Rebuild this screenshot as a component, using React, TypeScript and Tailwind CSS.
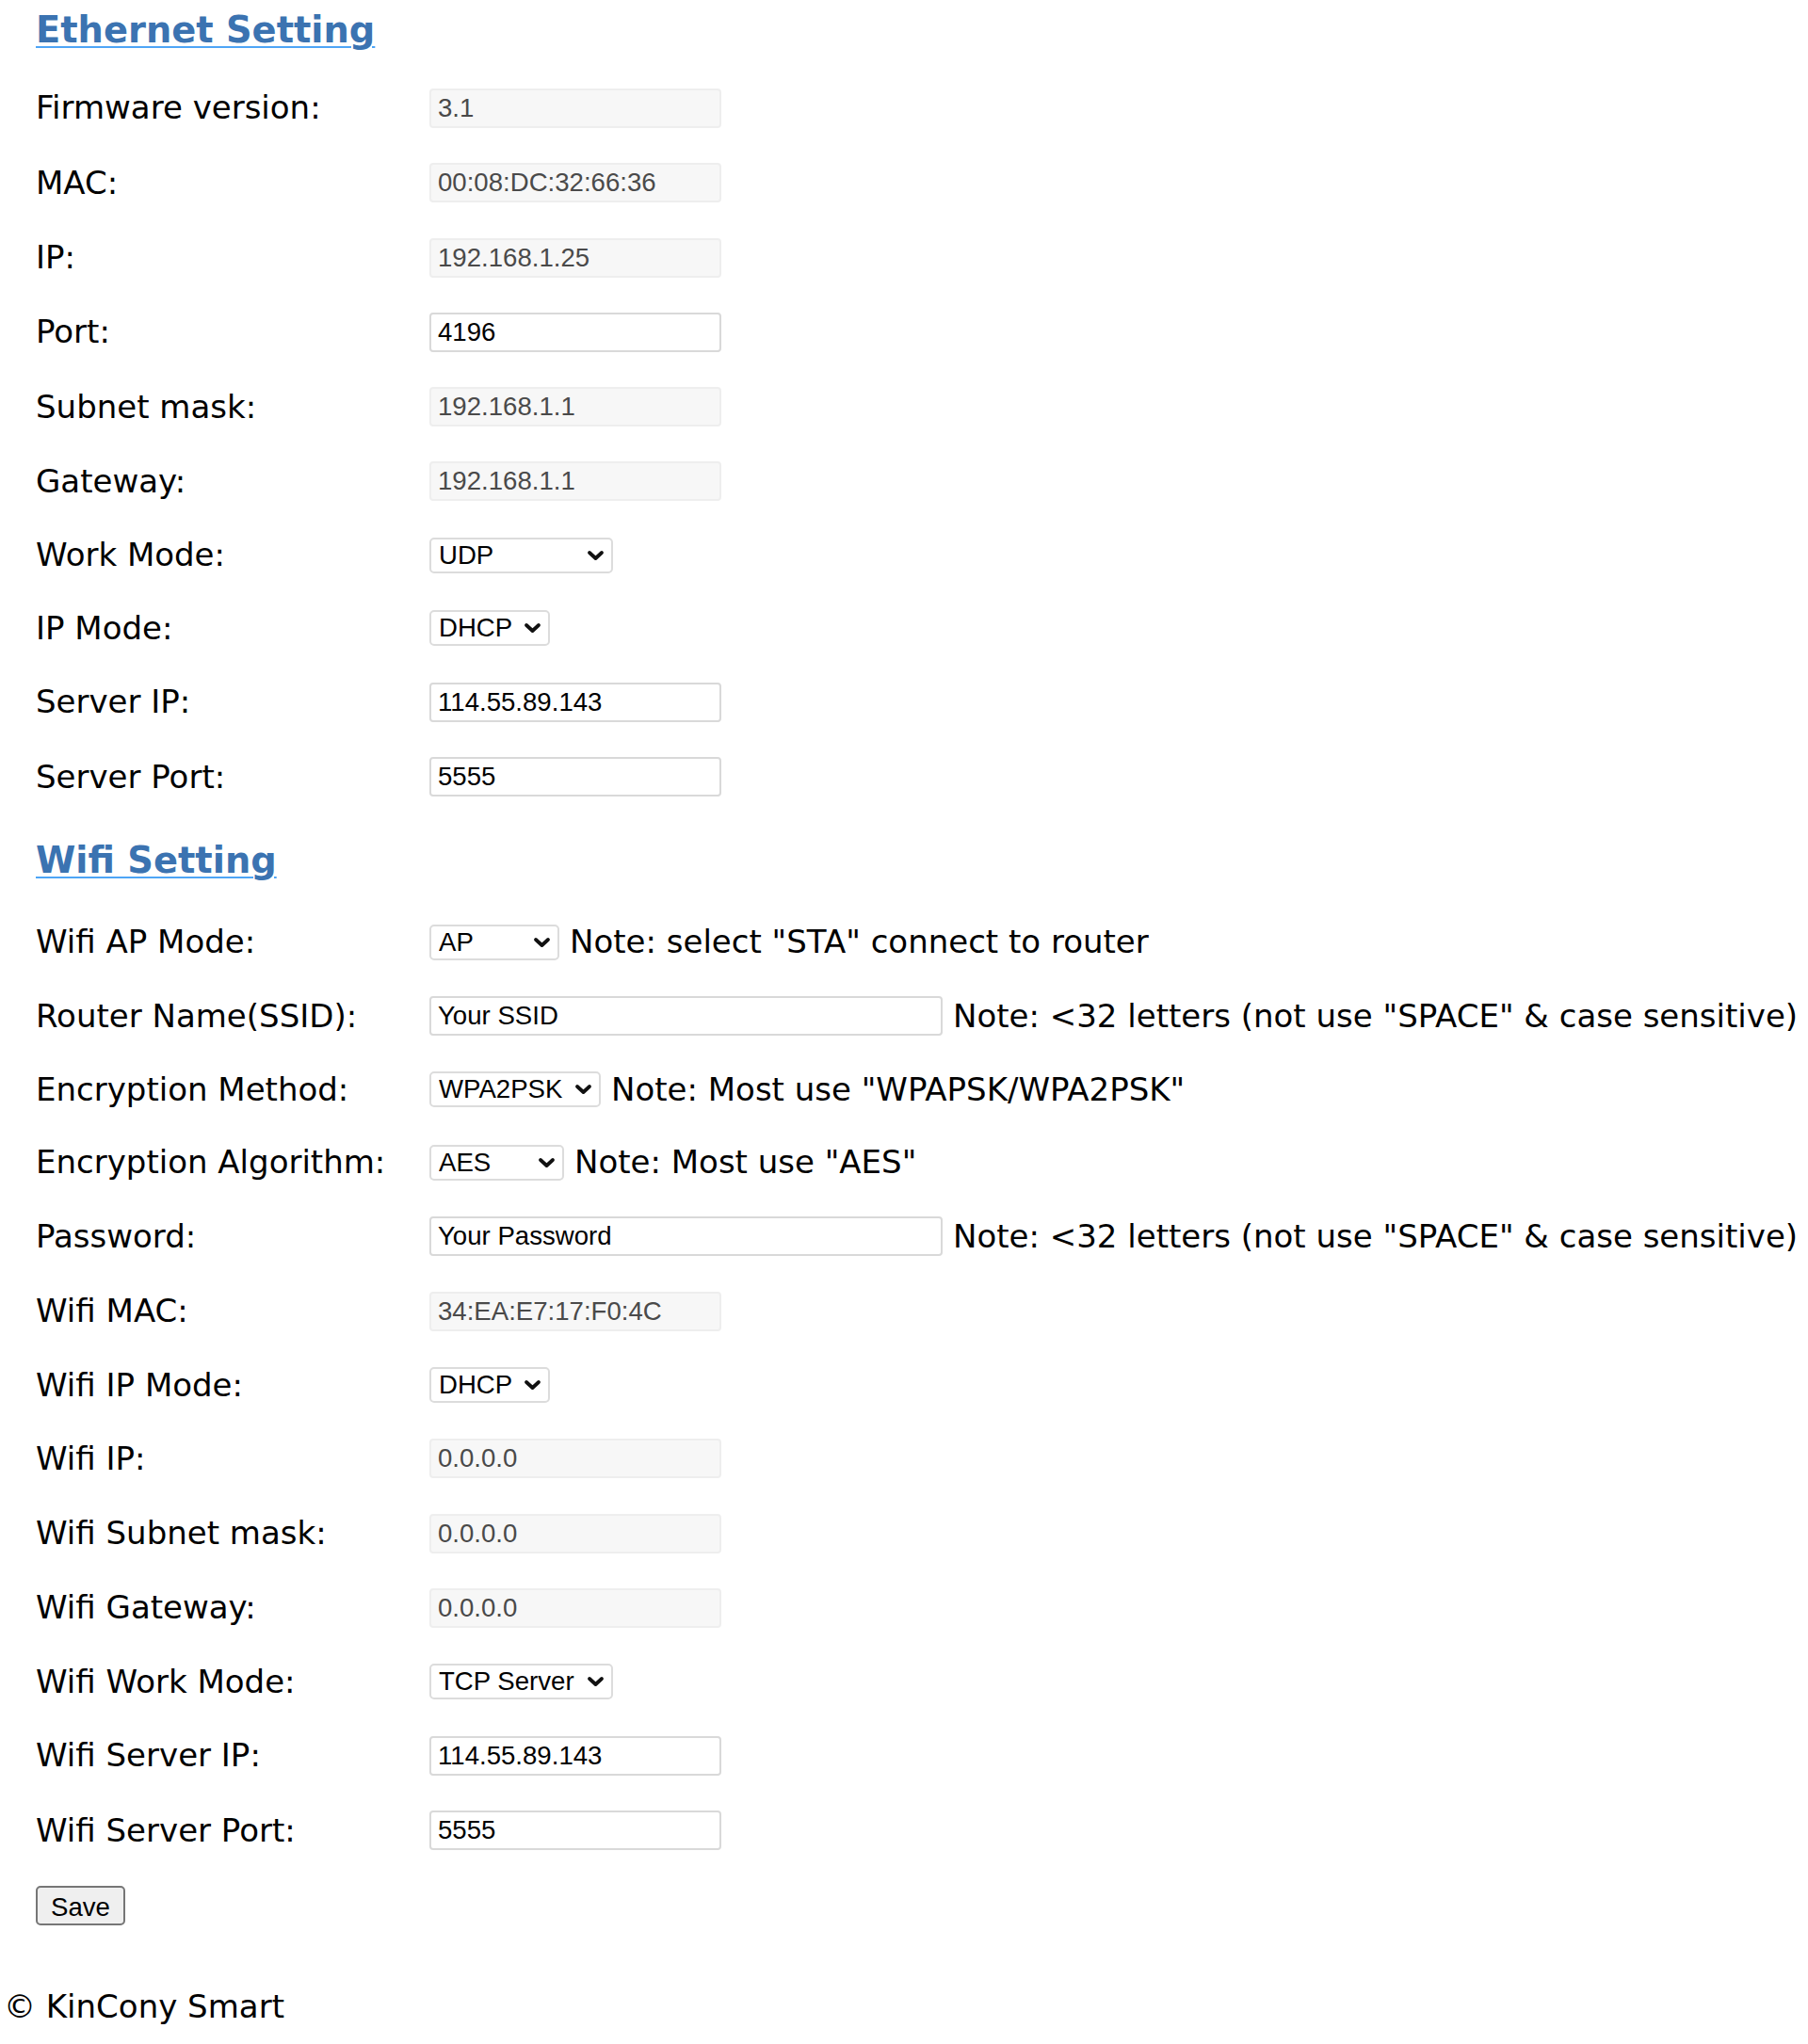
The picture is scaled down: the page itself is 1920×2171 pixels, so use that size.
import React from "react";

type Kind = "in" | "sel";

const labelCls =
  "w-[418px] shrink-0 font-['DejaVu_Sans',Verdana,sans-serif] text-[34px] leading-[39px] text-black";
const noteCls =
  "ml-[11px] whitespace-nowrap font-['DejaVu_Sans',Verdana,sans-serif] text-[34px] leading-[39px] text-black";

function Row({ label, kind, children }: { label: string; kind: Kind; children: React.ReactNode }) {
  return (
    <div className={kind === "in" ? "flex h-[79.3px] items-center" : "flex h-[77.5px] items-center"}>
      <div className={labelCls}>{label}</div>
      <div className="flex items-center">{children}</div>
    </div>
  );
}

function ReadBox({ value }: { value: string }) {
  return (
    <input
      readOnly
      value={value}
      className="box-border h-[42px] w-[310px] rounded-[4px] border-2 border-[#eeeeee] bg-[#f7f7f7] pl-[7px] font-['Liberation_Sans',Arial,sans-serif] text-[27.6px] text-[#4a4a4a] outline-none"
    />
  );
}

function EditBox({ value, wide }: { value: string; wide?: boolean }) {
  return (
    <input
      readOnly
      value={value}
      className={
        wide
          ? "box-border h-[42px] w-[545px] rounded-[4px] border-2 border-[#d9d9d9] bg-white pl-[7px] font-['Liberation_Sans',Arial,sans-serif] text-[27.6px] text-black outline-none"
          : "box-border h-[42px] w-[310px] rounded-[4px] border-2 border-[#d9d9d9] bg-white pl-[7px] font-['Liberation_Sans',Arial,sans-serif] text-[27.6px] text-black outline-none"
      }
    />
  );
}

function Chevron() {
  return (
    <svg
      className="pointer-events-none absolute right-[9px] top-[13px]"
      width="19"
      height="12"
      viewBox="0 0 19 12"
    >
      <path
        d="M3 3 L9.5 9 L16 3"
        stroke="#111"
        strokeWidth="3.8"
        fill="none"
        strokeLinecap="round"
        strokeLinejoin="round"
      />
    </svg>
  );
}

function Select({ options, widthCls }: { options: string[]; widthCls: string }) {
  return (
    <div className="relative">
      <select
        defaultValue={options[0]}
        className={
          "box-border h-[38px] appearance-none rounded-[5px] border-2 border-[#dcdcdc] bg-white pl-[8px] font-['Liberation_Sans',Arial,sans-serif] text-[27.6px] leading-[34px] text-black outline-none " +
          widthCls
        }
      >
        {options.map((o) => (
          <option key={o}>{o}</option>
        ))}
      </select>
      <Chevron />
    </div>
  );
}

function Heading({ children }: { children: React.ReactNode }) {
  return (
    <h3 className="h-[44px] font-['DejaVu_Sans',Verdana,sans-serif] text-[38.4px] font-bold leading-[44px] text-[#3b73b1] underline decoration-[#4ea5f6] decoration-2 underline-offset-[4px]">
      {children}
    </h3>
  );
}

export default function App() {
  return (
    <div className="min-h-[2171px] bg-white">
      <div className="pl-[38px]">
        <div className="pt-[9.5px]">
          <Heading>Ethernet Setting</Heading>
        </div>
        <div className="mt-[21.8px]">
          <Row label="Firmware version:" kind="in">
            <ReadBox value="3.1" />
          </Row>
          <Row label="MAC:" kind="in">
            <ReadBox value="00:08:DC:32:66:36" />
          </Row>
          <Row label="IP:" kind="in">
            <ReadBox value="192.168.1.25" />
          </Row>
          <Row label="Port:" kind="in">
            <EditBox value="4196" />
          </Row>
          <Row label="Subnet mask:" kind="in">
            <ReadBox value="192.168.1.1" />
          </Row>
          <Row label="Gateway:" kind="in">
            <ReadBox value="192.168.1.1" />
          </Row>
          <Row label="Work Mode:" kind="sel">
            <Select options={["UDP", "TCP Client", "TCP Server"]} widthCls="w-[195px]" />
          </Row>
          <Row label="IP Mode:" kind="sel">
            <Select options={["DHCP", "Static"]} widthCls="w-[128px]" />
          </Row>
          <Row label="Server IP:" kind="in">
            <EditBox value="114.55.89.143" />
          </Row>
          <Row label="Server Port:" kind="in">
            <EditBox value="5555" />
          </Row>
        </div>

        <div className="mt-[27px]">
          <Heading>Wifi Setting</Heading>
        </div>
        <div className="mt-[26.2px]">
          <Row label="Wifi AP Mode:" kind="sel">
            <Select options={["AP", "STA"]} widthCls="w-[138px]" />
            <span className={noteCls}>Note: select "STA" connect to router</span>
          </Row>
          <Row label="Router Name(SSID):" kind="in">
            <EditBox value="Your SSID" wide />
            <span className={noteCls}>Note: &lt;32 letters (not use "SPACE" &amp; case sensitive)</span>
          </Row>
          <Row label="Encryption Method:" kind="sel">
            <Select options={["WPA2PSK", "WPAPSK", "OPEN"]} widthCls="w-[182px]" />
            <span className={noteCls}>Note: Most use "WPAPSK/WPA2PSK"</span>
          </Row>
          <Row label="Encryption Algorithm:" kind="sel">
            <Select options={["AES", "TKIP"]} widthCls="w-[143px]" />
            <span className={noteCls}>Note: Most use "AES"</span>
          </Row>
          <Row label="Password:" kind="in">
            <EditBox value="Your Password" wide />
            <span className={noteCls}>Note: &lt;32 letters (not use "SPACE" &amp; case sensitive)</span>
          </Row>
          <Row label="Wifi MAC:" kind="in">
            <ReadBox value="34:EA:E7:17:F0:4C" />
          </Row>
          <Row label="Wifi IP Mode:" kind="sel">
            <Select options={["DHCP", "Static"]} widthCls="w-[128px]" />
          </Row>
          <Row label="Wifi IP:" kind="in">
            <ReadBox value="0.0.0.0" />
          </Row>
          <Row label="Wifi Subnet mask:" kind="in">
            <ReadBox value="0.0.0.0" />
          </Row>
          <Row label="Wifi Gateway:" kind="in">
            <ReadBox value="0.0.0.0" />
          </Row>
          <Row label="Wifi Work Mode:" kind="sel">
            <Select options={["TCP Server", "TCP Client", "UDP"]} widthCls="w-[195px]" />
          </Row>
          <Row label="Wifi Server IP:" kind="in">
            <EditBox value="114.55.89.143" />
          </Row>
          <Row label="Wifi Server Port:" kind="in">
            <EditBox value="5555" />
          </Row>
        </div>

        <div className="mt-[18.8px]">
          <button
            type="button"
            className="box-border h-[42px] w-[95px] rounded-[5px] border-2 border-[#767676] bg-[#efefef] font-['Liberation_Sans',Arial,sans-serif] text-[27.6px] text-black"
          >
            Save
          </button>
        </div>
      </div>

      <div className="mt-[67px] pl-[4px] font-['DejaVu_Sans',Verdana,sans-serif] text-[34px] leading-[39px] text-black">
        © KinCony Smart
      </div>
    </div>
  );
}
